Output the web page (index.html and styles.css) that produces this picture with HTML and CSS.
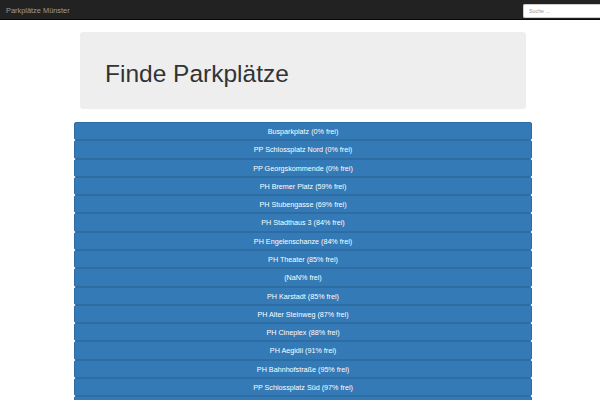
FILE: index.html
```html
<!DOCTYPE html>
<html lang="de">
<head>
<meta charset="utf-8">
<title>Parkplätze Münster</title>
<link rel="stylesheet" href="styles.css">
</head>
<body>
<nav class="navbar">
  <span class="brand">Parkplätze Münster</span>
  <input class="search" type="text" placeholder="Suche ...">
</nav>
<main class="container">
  <div class="jumbotron"><h1>Finde Parkplätze</h1></div>
  <div class="list">
    <button class="item">Busparkplatz (0% frei)</button>
    <button class="item">PP Schlossplatz Nord (0% frei)</button>
    <button class="item">PP Georgskommende (0% frei)</button>
    <button class="item">PH Bremer Platz (59% frei)</button>
    <button class="item">PH Stubengasse (69% frei)</button>
    <button class="item">PH Stadthaus 3 (84% frei)</button>
    <button class="item">PH Engelenschanze (84% frei)</button>
    <button class="item">PH Theater (85% frei)</button>
    <button class="item">(NaN% frei)</button>
    <button class="item">PH Karstadt (85% frei)</button>
    <button class="item">PH Alter Steinweg (87% frei)</button>
    <button class="item">PH Cineplex (88% frei)</button>
    <button class="item">PH Aegidii (91% frei)</button>
    <button class="item">PH Bahnhofstraße (95% frei)</button>
    <button class="item">PP Schlossplatz Süd (97% frei)</button>
    <button class="item item-edge"></button>
  </div>
</main>
</body>
</html>
```
FILE: styles.css
```css
html, body {
  margin: 0;
  padding: 0;
  background: #fff;
  font-family: "Liberation Sans", Arial, sans-serif;
  overflow: hidden;
}
.navbar {
  height: 19px;
  background: #222;
  border-bottom: 1px solid #080808;
  display: flex;
  align-items: center;
  justify-content: space-between;
  padding-left: 6px;
}
.brand {
  color: #9d9d9d;
  font-size: 7.4px;
  position: relative;
  top: 1px;
}
.search {
  width: 77px;
  height: 14px;
  box-sizing: border-box;
  border: 1px solid #ccc;
  border-right: none;
  border-radius: 2px 0 0 2px;
  background: #fff;
  padding: 0 5px;
  font-family: "Liberation Sans", Arial, sans-serif;
  font-size: 5.3px;
  color: #555;
  outline: none;
  position: relative;
  top: 1px;
}
.search::placeholder {
  color: #999;
}
.container {
  width: 458px;
  margin-left: 74px;
  padding-top: 12px;
}
.jumbotron {
  margin: 0 6px;
  height: 77px;
  background: #eee;
  border-radius: 3px;
  display: flex;
  align-items: center;
  padding-left: 25px;
}
.jumbotron h1 {
  margin: 0;
  font-weight: 500;
  font-size: 24.5px;
  color: #333;
  line-height: 1;
  position: relative;
  top: 4px;
}
.list {
  margin-top: 13px;
  display: flex;
  flex-direction: column;
}
.item {
  height: 18.29px;
  flex: none;
  box-sizing: border-box;
  border: 1px solid #2e6da4;
  border-radius: 2px;
  background: #337ab7;
  color: #fff;
  font-family: "Liberation Sans", Arial, sans-serif;
  font-size: 7.2px;
  padding: 1px 0 0;
  margin: 0;
  text-align: center;
  line-height: 16px;
}
```
